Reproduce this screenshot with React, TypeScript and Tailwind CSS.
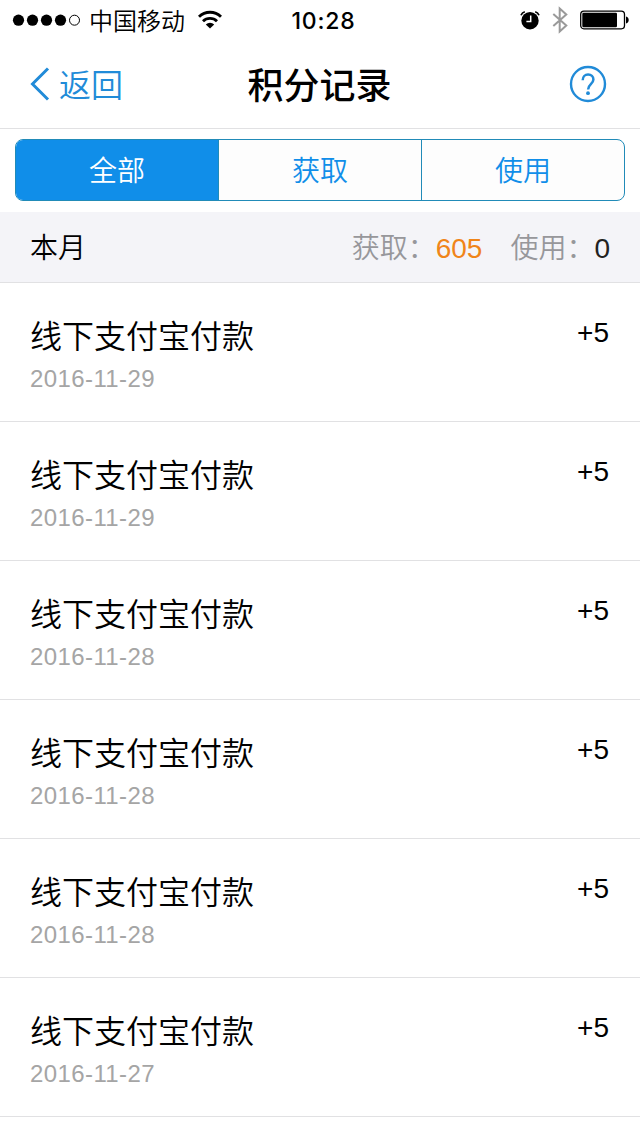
type PointsRecord = {
  title: string
  date: string
  points: string
}

const tabs = ["全部", "获取", "使用"]

const records: PointsRecord[] = [
  { title: "线下支付宝付款", date: "2016-11-29", points: "+5" },
  { title: "线下支付宝付款", date: "2016-11-29", points: "+5" },
  { title: "线下支付宝付款", date: "2016-11-28", points: "+5" },
  { title: "线下支付宝付款", date: "2016-11-28", points: "+5" },
  { title: "线下支付宝付款", date: "2016-11-28", points: "+5" },
  { title: "线下支付宝付款", date: "2016-11-27", points: "+5" },
]

function SignalDots() {
  return (
    <svg className="shrink-0" width="68" height="12" viewBox="0 0 68 12">
      {[6.5, 20.5, 34.5, 48.5].map((cx) => (
        <circle key={cx} cx={cx} cy="6.2" r="5.6" fill="#000" />
      ))}
      <circle cx="62.5" cy="6.2" r="5" fill="none" stroke="#000" />
    </svg>
  )
}

function WifiIcon() {
  return (
    <svg width="26" height="20" viewBox="0 0 26 20" fill="none" stroke="#000" strokeWidth="2.9">
      <path d="M2 6.7a16 16 0 0 1 22 0" />
      <path d="M6 11.2a10.2 10.2 0 0 1 14 0" />
      <path d="M13 18.6l-4.2-4.2a6 6 0 0 1 8.4 0z" fill="#000" stroke="none" />
    </svg>
  )
}

function AlarmIcon() {
  return (
    <svg width="20" height="20" viewBox="0 0 20 20" fill="none">
      <circle cx="10" cy="10.7" r="8.7" fill="#000" />
      <path d="M1 5.2A6 6 0 0 1 4.8 1.7M19 5.2a6 6 0 0 0-3.8-3.5" stroke="#000" strokeWidth="1.7" />
      <path d="M10.7 5.6v5.9H6.4" stroke="#fff" strokeWidth="1.5" />
    </svg>
  )
}

function BluetoothIcon() {
  return (
    <svg width="16" height="28" viewBox="0 0 16 28" fill="none" stroke="#9a9a9a" strokeWidth="2">
      <path d="M1.3 8l13 11.6-6.6 6V2.4l6.6 6-13 11.6" />
    </svg>
  )
}

function BatteryIcon() {
  return (
    <svg width="49" height="20" viewBox="0 0 49 20">
      <rect x="0.7" y="1.2" width="43.8" height="17.6" rx="3.2" fill="none" stroke="#000" strokeWidth="1.3" />
      <rect x="2.3" y="2.8" width="34.7" height="14.4" rx="1.2" fill="#000" />
      <path d="M46 6.5c3.6.6 3.6 6.4 0 7z" fill="#000" />
    </svg>
  )
}

function StatusBar() {
  return (
    <div className="grid h-10 grid-cols-3 items-center pl-3 pr-[11px] text-2xl leading-none text-black">
      <div className="flex items-center">
        <SignalDots />
        <span className="ml-[9px] whitespace-nowrap pt-[3px]">中国移动</span>
        <span className="ml-3">
          <WifiIcon />
        </span>
      </div>
      <div className="pl-1.5 pt-0.5 text-center font-['Inter'] text-[23px] font-medium tracking-[0.8px]">10:28</div>
      <div className="flex items-center justify-end">
        <AlarmIcon />
        <span className="ml-3">
          <BluetoothIcon />
        </span>
        <span className="ml-3">
          <BatteryIcon />
        </span>
      </div>
    </div>
  )
}

function NavBar() {
  return (
    <header className="grid h-[89px] grid-cols-3 items-center border-b border-[#e1e1e3] pl-[30px] pr-[33px]">
      <button className="flex items-center gap-[9px] text-[32px] leading-none text-[#218bd8]">
        <svg width="20" height="34" viewBox="0 0 20 34" fill="none" stroke="#218bd8" strokeWidth="3">
          <path d="M18 1.5L2.5 17 18 32.5" />
        </svg>
        <span className="pt-[3px]">返回</span>
      </button>
      <h1 className="whitespace-nowrap pl-0.5 pt-1.5 text-center text-4xl font-medium leading-none text-black">积分记录</h1>
      <button className="justify-self-end" aria-label="帮助">
        <svg width="38" height="38" viewBox="0 0 38 38" fill="none" stroke="#218bd8">
          <circle cx="19" cy="19" r="17" strokeWidth="2.4" />
          <path d="M13.7 15.2c0-3.5 2.3-5.7 5.4-5.7s5.3 2.1 5.3 5c0 4.6-5.3 4.8-5.3 10" strokeWidth="2.5" />
          <circle cx="19" cy="28.2" r="1.9" fill="#218bd8" stroke="none" />
        </svg>
      </button>
    </header>
  )
}

function Tabs() {
  return (
    <div className="px-[15px] pb-[11px] pt-2.5">
      <div className="flex h-[62px] divide-x divide-[#218bb8] overflow-hidden rounded-lg border border-[#218bb8] bg-[#fdfdfd]">
        {tabs.map((tab, index) => (
          <button
            key={tab}
            className={
              index === 0
                ? "flex-1 bg-[#108ee9] pt-1 text-[28px] leading-none text-white"
                : "flex-1 pt-1 text-[28px] leading-none text-[#108ee9]"
            }
          >
            {tab}
          </button>
        ))}
      </div>
    </div>
  )
}

function MonthSummary() {
  return (
    <div className="flex h-[71px] items-center justify-between border-b border-[#e1e1e3] bg-[#f4f4f8] px-[30px] pt-[3px] text-[28px] leading-none">
      <span className="text-black">本月</span>
      <div className="flex gap-7 text-[#97979b]">
        <span>
          获取：
          <span className="text-[#f08519]">605</span>
        </span>
        <span>
          使用：
          <span className="text-[#222]">0</span>
        </span>
      </div>
    </div>
  )
}

export default function App() {
  return (
    <div className="h-[1136px] w-[640px] overflow-hidden bg-white font-['Liberation_Sans','Noto_Sans_CJK_SC',sans-serif] font-[350]">
      <StatusBar />
      <NavBar />
      <Tabs />
      <MonthSummary />
      <ul>
        {records.map((record, index) => (
          <li key={index} className="flex h-[139px] justify-between border-b border-[#e1e1e3] pl-[30px] pr-[31px] pt-8">
            <div>
              <div className="text-[32px] leading-[44px] text-black">{record.title}</div>
              <div className="mt-1 text-2xl leading-8 tracking-[0.4px] text-[#a5a5a5]">{record.date}</div>
            </div>
            <span className="text-[28px] leading-9 text-black">{record.points}</span>
          </li>
        ))}
      </ul>
    </div>
  )
}
